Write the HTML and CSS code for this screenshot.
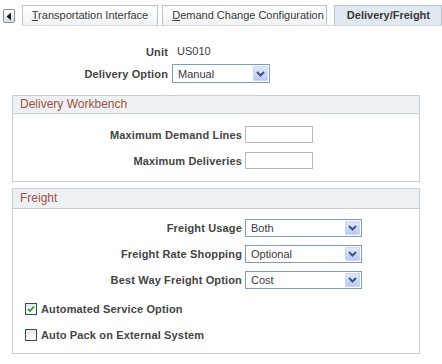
FILE: index.html
```html
<!DOCTYPE html>
<html lang="en">
<head>
    <meta charset="UTF-8">
    <title>Delivery/Freight</title>
    <link rel="stylesheet" href="styles.css">
</head>
<body>
    <div class="tab-bar">
        <span class="tab-scroll">
            <svg width="8" height="9" viewBox="0 0 8 9"><path d="M6 0.5 L1.5 4.5 L6 8.5 Z" fill="#1a1a1a"/></svg>
        </span>
        <div class="tab-list">
            <span class="tab"><u>T</u>ransportation Interface</span>
            <span class="tab tab-tight"><u>D</u>emand Change Configuration</span>
            <span class="tab tab-active">Delivery/Freight</span>
        </div>
    </div>

    <div class="head-fields">
        <span class="label">Unit</span>
        <span class="value">US010</span>
        <span class="label">Delivery Option</span>
        <div class="select select-short">
            <span class="select-text">Manual</span>
            <span class="select-btn"><svg width="9" height="6" viewBox="0 0 9 6"><path d="M1 1 L4.5 4.5 L8 1" fill="none" stroke="#3f5478" stroke-width="2"/></svg></span>
        </div>
    </div>

    <div class="group">
        <div class="group-title">Delivery Workbench</div>
        <div class="group-body grid-wb">
            <span class="label">Maximum Demand Lines</span>
            <span class="text-input"></span>
            <span class="label">Maximum Deliveries</span>
            <span class="text-input"></span>
        </div>
    </div>

    <div class="group group-freight">
        <div class="group-title">Freight</div>
        <div class="group-body">
            <div class="grid-fr">
                <span class="label">Freight Usage</span>
                <div class="select">
                    <span class="select-text">Both</span>
                    <span class="select-btn"><svg width="9" height="6" viewBox="0 0 9 6"><path d="M1 1 L4.5 4.5 L8 1" fill="none" stroke="#3f5478" stroke-width="2"/></svg></span>
                </div>
                <span class="label">Freight Rate Shopping</span>
                <div class="select">
                    <span class="select-text">Optional</span>
                    <span class="select-btn"><svg width="9" height="6" viewBox="0 0 9 6"><path d="M1 1 L4.5 4.5 L8 1" fill="none" stroke="#3f5478" stroke-width="2"/></svg></span>
                </div>
                <span class="label">Best Way Freight Option</span>
                <div class="select">
                    <span class="select-text">Cost</span>
                    <span class="select-btn"><svg width="9" height="6" viewBox="0 0 9 6"><path d="M1 1 L4.5 4.5 L8 1" fill="none" stroke="#3f5478" stroke-width="2"/></svg></span>
                </div>
            </div>
            <div class="check-row check-first">
                <span class="checkbox"><svg width="10" height="10" viewBox="0 0 10 10"><path d="M2 5 L4 7 L8 2.5" fill="none" stroke="#1e9a1e" stroke-width="1.6"/></svg></span>
                <span class="label">Automated Service Option</span>
            </div>
            <div class="check-row">
                <span class="checkbox"></span>
                <span class="label">Auto Pack on External System</span>
            </div>
        </div>
    </div>
</body>
</html>
```

FILE: styles.css
```css
body {
    margin: 0;
    width: 442px;
    font-family: "Liberation Sans", Arial, sans-serif;
    font-size: 11px;
    color: #3a3a3a;
    background: white;
}
.tab-bar {
    display: flex;
    align-items: flex-end;
    padding: 5px 0 0 3px;
    height: 21px;
}
.tab-scroll {
    width: 11px;
    height: 12px;
    border: 1px solid #8a8f96;
    border-radius: 2px;
    background: linear-gradient(#ffffff, #d9dde2);
    display: flex;
    align-items: center;
    justify-content: center;
    margin: 0 7px 3px 0;
}
.tab-list {
    flex: 1;
    display: flex;
    align-items: flex-end;
    gap: 4px;
    height: 20px;
    border-bottom: 1px solid #d6dbe2;
}
.tab {
    height: 19px;
    line-height: 19px;
    padding: 0 9px 0 9px;
    border: 1px solid #bcc3cb;
    border-bottom: none;
    background: linear-gradient(#ffffff, #f1f2f4);
    color: #3a3a3a;
    white-space: nowrap;
}
.tab-tight {
    padding-right: 2px;
}
.tab-active {
    margin-left: 3px;
    padding: 0 11px 0 12px;
    background: #e0e8f1;
    font-weight: bold;
}
.label {
    font-weight: bold;
    text-align: right;
    white-space: nowrap;
    color: #444;
    letter-spacing: 0.15px;
}
.head-fields {
    display: grid;
    grid-template-columns: 168px auto;
    column-gap: 4px;
    row-gap: 3px;
    align-items: center;
    justify-items: start;
    margin-top: 16px;
}
.head-fields .label {
    justify-self: end;
}
.value {
    line-height: 19px;
    padding-left: 5px;
}
.select {
    box-sizing: border-box;
    width: 117px;
    height: 18px;
    border: 1px solid #7f9db9;
    display: flex;
    align-items: center;
    padding: 1px 1px 1px 0;
    background: white;
}
.select-short {
    width: 98px;
    height: 19px;
}
.select-text {
    flex: 1;
    padding-left: 5px;
}
.select-btn {
    width: 15px;
    height: 100%;
    border-radius: 1px;
    background: linear-gradient(#dfe7fc, #b9cbf6);
    border: 1px solid #c9d6f7;
    box-sizing: border-box;
    display: flex;
    align-items: center;
    justify-content: center;
}
.group {
    margin: 12px 22px 0 12px;
    border: 1px solid #c9ced3;
}
.group-freight {
    margin-top: 6px;
}
.group-title {
    height: 17px;
    line-height: 17px;
    padding-left: 7px;
    background: #eef1f3;
    border-bottom: 1px solid #c9ced3;
    color: #a0523f;
    font-size: 12px;
}
.group-freight .group-title {
    height: 19px;
    line-height: 19px;
}
.group-body {
    padding: 12px 0 12px 0;
}
.grid-wb,
.grid-fr {
    display: grid;
    grid-template-columns: 229px auto;
    column-gap: 3px;
    align-items: center;
    justify-items: start;
}
.grid-wb {
    row-gap: 9px;
}
.grid-fr {
    row-gap: 8px;
}
.grid-wb .label,
.grid-fr .label {
    justify-self: end;
}
.group-freight .group-body {
    padding: 10px 0 9px 12px;
}
.group-freight .grid-fr {
    grid-template-columns: 217px auto;
}
.text-input {
    width: 66px;
    height: 15px;
    border: 1px solid #b5b9bd;
    background: white;
}
.check-row {
    display: flex;
    align-items: center;
    gap: 4px;
    height: 18px;
    margin-top: 8px;
}
.check-first {
    margin-top: 11px;
}
.checkbox {
    width: 10px;
    height: 10px;
    border: 1px solid #294e74;
    background: linear-gradient(#e6e7e9, #ffffff);
    display: flex;
    align-items: center;
    justify-content: center;
}
.check-row .label {
    text-align: left;
}
```
